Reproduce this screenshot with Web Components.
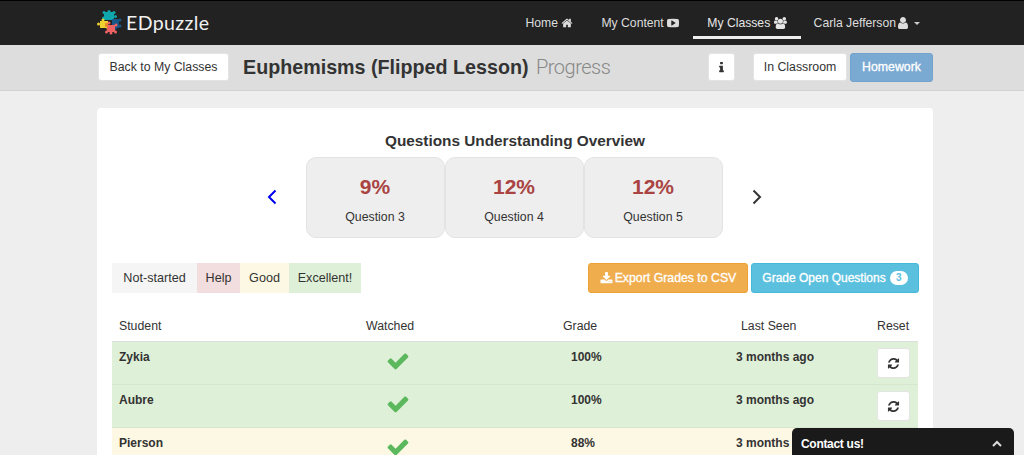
<!DOCTYPE html>
<html>
<head>
<meta charset="utf-8">
<title>EDpuzzle</title>
<style>
  html, body { margin: 0; height: 455px; overflow: hidden; }
  body { background: #eee; color: #333; font-family: "Liberation Sans", Arial, sans-serif; font-size: 13px; }
</style>
</head>
<body>
<ed-navbar></ed-navbar>
<ed-subbar title-text="Euphemisms (Flipped Lesson)"></ed-subbar>
<ed-card>
  <ed-overview></ed-overview>
  <ed-toolbar></ed-toolbar>
  <ed-grades>
    <ed-row name="Zykia" grade="100%" seen="3 months ago" tone="good"></ed-row>
    <ed-row name="Aubre" grade="100%" seen="3 months ago" tone="good"></ed-row>
    <ed-row name="Pierson" grade="88%" seen="3 months ago" tone="ok"></ed-row>
  </ed-grades>
</ed-card>
<ed-contact></ed-contact>

<script>
const ICONS = {
  home: [1792, "M1472 992v480q0 26-19 45t-45 19h-384v-384h-256v384h-384q-26 0-45-19t-19-45v-480q0-1 .5-3t.5-3l575-474 575 474q1 2 1 6zm223-69l-62 74q-8 9-21 11h-3q-13 0-21-7l-692-577-692 577q-12 8-24 7-13-2-21-11l-62-74q-8-10-7-23.500t11-21.500l719-599q32-26 76-26t76 26l244 204v-195q0-14 9-23t23-9h192q14 0 23 9t9 23v408l219 182q10 8 11 21.500t-7 23.500z"],
  play: [1792, "M1280 896q0-37-30-54l-512-320q-31-20-65-2-33 18-33 56v640q0 38 33 56 16 8 31 8 20 0 34-10l512-320q30-17 30-54zm512 0q0 96-1 150t-8.500 136.500-22.500 147.500q-16 73-69 123t-124 58q-222 25-671 25t-671-25q-71-8-124.500-58t-69.500-123q-14-65-21.500-147.500t-8.500-136.500-1-150 1-150 8.500-136.500 22.500-147.500q16-73 69-123t124-58q222-25 671-25t671 25q71 8 124.500 58t69.500 123q14 65 21.500 147.500t8.500 136.500 1 150z"],
  users: [1920, "M593 896q-162 5-265 128h-134q-82 0-138-40.500t-56-118.500q0-353 124-353 6 0 43.500 21t97.500 42.500 119 21.500q67 0 133-23-5 37-5 66 0 139 81 256zm1071 637q0 120-73 189.500t-194 69.500h-874q-121 0-194-69.500t-73-189.500q0-53 3.500-103.500t14-109 26.500-108.500 43-97.500 62-81 85.500-53.500 111.500-20q10 0 43 21.500t73 48 107 48 135 21.500 135-21.500 107-48 73-48 43-21.500q61 0 111.500 20t85.500 53.500 62 81 43 97.500 26.500 108.500 14 109 3.500 103.500zm-1024-1277q0 106-75 181t-181 75-181-75-75-181 75-181 181-75 181 75 75 181zm704 384q0 159-112.500 271.500t-271.500 112.500-271.500-112.500-112.500-271.500 112.500-271.500 271.500-112.500 271.500 112.500 112.500 271.500zm576 225q0 78-56 118.500t-138 40.500h-134q-103-123-265-128 81-117 81-256 0-29-5-66 66 23 133 23 59 0 119-21.500t97.500-42.500 43.500-21q124 0 124 353zm-128-609q0 106-75 181t-181 75-181-75-75-181 75-181 181-75 181 75 75 181z"],
  user: [1792, "M1536 1399q0 109-62.500 187t-150.500 78h-854q-88 0-150.500-78t-62.500-187q0-85 8.500-160.500t31.500-152 58.500-131 94-89 134.500-34.500q131 128 313 128t313-128q76 0 134.500 34.500t94 89 58.500 131 31.500 152 8.500 160.500zm-256-887q0 159-112.500 271.500t-271.500 112.500-271.500-112.500-112.500-271.500 112.500-271.500 271.500-112.500 271.500 112.500 112.500 271.500z"],
  info: [1792, "M1216 1344v128q0 26-19 45t-45 19h-512q-26 0-45-19t-19-45v-128q0-26 19-45t45-19h64v-384h-64q-26 0-45-19t-19-45v-128q0-26 19-45t45-19h384q26 0 45 19t19 45v576h64q26 0 45 19t19 45zm-128-1152v192q0 26-19 45t-45 19h-256q-26 0-45-19t-19-45v-192q0-26 19-45t45-19h256q26 0 45 19t19 45z"],
  download: [1792, "M1344 1344q0-26-19-45t-45-19-45 19-19 45 19 45 45 19 45-19 19-45zm256 0q0-26-19-45t-45-19-45 19-19 45 19 45 45 19 45-19 19-45zm128-224v320q0 40-28 68t-68 28h-1472q-40 0-68-28t-28-68v-320q0-40 28-68t68-28h465l135 136q58 56 136 56t136-56l136-136h464q40 0 68 28t28 68zm-325-569q17 41-14 70l-448 448q-18 19-45 19t-45-19l-448-448q-31-29-14-70 17-39 59-39h256v-448q0-26 19-45t45-19h256q26 0 45 19t19 45v448h256q42 0 59 39z"],
  check: [1792, "M1671 566q0 40-28 68l-724 724-136 136q-28 28-68 28t-68-28l-136-136-362-362q-28-28-28-68t28-68l136-136q28-28 68-28t68 28l294 295 656-657q28-28 68-28t68 28l136 136q28 28 28 68z"],
  refresh: [1792, "M1639 1056q0 5-1 7-64 268-268 434.500t-478 166.500q-146 0-282.500-55t-243.500-157l-129 129q-19 19-45 19t-45-19-19-45v-448q0-26 19-45t45-19h448q26 0 45 19t19 45-19 45l-137 137q71 66 161 102t187 36q134 0 250-65t186-179q11-17 53-117 8-23 30-23h192q13 0 22.500 9.500t9.500 22.500zm25-800v448q0 26-19 45t-45 19h-448q-26 0-45-19t-19-45 19-45l138-138q-148-137-349-137-134 0-250 65t-186 179q-11 17-53 117-8 23-30 23h-199q-13 0-22.500-9.500t-9.500-22.500v-7q65-268 270-434.500t480-166.500q146 0 284 55.500t245 156.500l130-129q19-19 45-19t45 19 19 45z"]
};

class EdIcon extends HTMLElement {
  connectedCallback() {
    const [w, d] = ICONS[this.getAttribute("name")];
    const size = this.getAttribute("size") || 14;
    const width = size * w / 1792;
    this.attachShadow({ mode: "open" }).innerHTML = `
      <style>:host { display: inline-flex; vertical-align: middle; } svg { display: block; fill: currentColor; }</style>
      <svg width="${width}" height="${size}" viewBox="0 0 ${w} 1792"><path d="${d}"/></svg>`;
  }
}
customElements.define("ed-icon", EdIcon);

class EdButton extends HTMLElement {
  constructor() {
    super();
    this.attachShadow({ mode: "open" }).innerHTML = `
      <style>
        :host { display: inline-flex; align-items: center; justify-content: center; box-sizing: border-box;
                height: 28px; padding: 0 10px; background: #fff; border: 1px solid #e4e4e4; border-radius: 3px;
                color: #333; font-size: 12.300px; white-space: nowrap; }
        :host([kind=primary]) { background: #7aa9d2; border-color: #72a3ce; color: #fff; height: 29px; -webkit-text-stroke: .3px #fff; }
        :host([kind=warning]) { background: #f0ad4e; border-color: #eea236; color: #fff; height: 30px; -webkit-text-stroke: .3px #fff; }
        :host([kind=info]) { background: #5bc0de; border-color: #46b8da; color: #fff; height: 30px; -webkit-text-stroke: .3px #fff; }
      </style>
      <slot></slot>`;
  }
}
customElements.define("ed-button", EdButton);

class EdNavbar extends HTMLElement {
  constructor() {
    super();
    this.attachShadow({ mode: "open" }).innerHTML = `
      <style>
        :host { display: flex; box-sizing: border-box; height: 45px; padding: 0 91px 0 97px; background: #222;
                border-top: 1px solid #000; color: #ddd; justify-content: space-between; }
        .brand { display: flex; align-items: center; gap: 4px; padding-bottom: 1px; }
        .brand span { font-family: Lato, sans-serif; font-size: 19.500px; letter-spacing: .4px; color: #f2f2f2; }
        nav { display: flex; }
        a { display: flex; align-items: center; gap: 3.500px; height: 44px; box-sizing: border-box; padding: 0 14px;
            font-size: 12.200px; white-space: nowrap; color: #ddd; }
        a.on { height: 38px; padding-top: 9px; border-bottom: 3px solid #eee; color: #e6e6e6; }
        a.me { gap: 0; padding: 0 13px; }
        .caret { width: 0; height: 0; border: 3.500px solid transparent; border-top-color: #ccc; border-bottom: 0; margin-left: 4px; }
      </style>
      <div class="brand">
        <svg width="25" height="25" viewBox="0 0 25 25">
          <g fill="#0fa7ad"><rect x="7" y="2" width="10" height="8"/><circle cx="12" cy="1.500" r="1.500"/><circle cx="7" cy="2.500" r="1.500"/><circle cx="17" cy="2.500" r="1.500"/><circle cx="18.500" cy="6.500" r="1.500"/><circle cx="6.500" cy="8" r="1.500"/></g>
          <g fill="#1b5686"><rect x="15" y="9" width="7" height="9"/><circle cx="23" cy="10" r="1.500"/><circle cx="23" cy="16" r="1.500"/><circle cx="18" cy="18.500" r="1.500"/></g>
          <g fill="#efd12f"><rect x="3" y="11" width="8" height="7"/><circle cx="1.500" cy="14" r="1.500"/><circle cx="6" cy="10" r="1.500"/><circle cx="11" cy="18.500" r="1.500"/></g>
          <g fill="#ee6264"><rect x="10" y="15" width="8" height="7"/><circle cx="9.500" cy="22" r="1.500"/><circle cx="18.500" cy="22" r="1.500"/><circle cx="14" cy="23" r="1.500"/><circle cx="19" cy="15" r="1.500"/><circle cx="12" cy="13" r="1.500"/></g>
          <rect x="8" y="13" width="3" height="4" fill="#e98a2e"/>
        </svg>
        <span>EDpuzzle</span>
      </div>
      <nav>
        <a>Home <ed-icon name="home" size="12"></ed-icon></a>
        <a>My Content <ed-icon name="play" size="12"></ed-icon></a>
        <a class="on">My Classes <ed-icon name="users" size="12"></ed-icon></a>
        <a class="me">Carla Jefferson <ed-icon name="user" size="14"></ed-icon><span class="caret"></span></a>
      </nav>`;
  }
}
customElements.define("ed-navbar", EdNavbar);

class EdSubbar extends HTMLElement {
  connectedCallback() {
    this.attachShadow({ mode: "open" }).innerHTML = `
      <style>
        :host { display: flex; box-sizing: border-box; height: 46px; padding: 0 91px 1px 98px; align-items: center;
                background: #ddd; border-bottom: 1px solid #d3d3d3; }
        h1 { margin: 0 0 0 14px; font-size: 19.700px; font-weight: bold; color: #333; flex: 1; white-space: nowrap; }
        h1 span { font-family: Roboto, sans-serif; font-weight: 300; color: #888; font-size: 20px; letter-spacing: -.5px; margin-left: 2px; }
        .back { width: 131px; padding: 0; }
        .info { width: 27px; padding: 0; margin-right: 18px; }
        .mode { width: 94px; padding: 0; margin-right: 3px; }
        .home { width: 83px; padding: 0; }
      </style>
      <ed-button class="back">Back to My Classes</ed-button>
      <h1>${this.getAttribute("title-text")} <span>Progress</span></h1>
      <ed-button class="info"><ed-icon name="info" size="13"></ed-icon></ed-button>
      <ed-button class="mode">In Classroom</ed-button>
      <ed-button class="home" kind="primary">Homework</ed-button>`;
  }
}
customElements.define("ed-subbar", EdSubbar);

class EdCard extends HTMLElement {
  constructor() {
    super();
    this.attachShadow({ mode: "open" }).innerHTML = `
      <style>
        :host { display: block; box-sizing: border-box; margin: 17px 91px 0 97px; padding: 23px 15px 0;
                height: 400px; background: #fff; border-radius: 4px; }
      </style>
      <slot></slot>`;
  }
}
customElements.define("ed-card", EdCard);

class EdTile extends HTMLElement {
  constructor() {
    super();
    this.attachShadow({ mode: "open" }).innerHTML = `
      <style>
        :host { display: flex; flex-direction: column; align-items: center; box-sizing: border-box; width: 139px; height: 81px;
                padding-top: 17px; background: #eee; border: 1px solid #e3e3e3; border-radius: 10px; }
        b { font-size: 21px; line-height: 24px; color: #a94442; }
        span { margin-top: 10px; font-size: 12.300px; line-height: 16px; color: #333; }
      </style>
      <b>${this.getAttribute("pct")}</b><span>${this.getAttribute("label")}</span>`;
  }
}
customElements.define("ed-tile", EdTile);

class EdOverview extends HTMLElement {
  constructor() {
    super();
    this.attachShadow({ mode: "open" }).innerHTML = `
      <style>
        :host { display: block; text-align: center; }
        h2 { margin: 0 0 6px; font-size: 15.350px; line-height: 20px; font-weight: bold; color: #333; }
        .strip { display: flex; align-items: center; justify-content: center; }
        svg { display: block; fill: none; stroke-width: 2; margin-top: -2px; }
        .prev { stroke: #00e; margin-right: 29px; margin-left: -2px; }
        .next { stroke: #333; margin-left: 29px; }
      </style>
      <h2>Questions Understanding Overview</h2>
      <div class="strip">
        <svg class="prev" width="10" height="16" viewBox="0 0 10 16"><path d="M8.500 1.500 2 8l6.500 6.500"/></svg>
        <ed-tile pct="9%" label="Question 3"></ed-tile>
        <ed-tile pct="12%" label="Question 4"></ed-tile>
        <ed-tile pct="12%" label="Question 5"></ed-tile>
        <svg class="next" width="10" height="16" viewBox="0 0 10 16"><path d="M1.500 1.500 8 8l-6.500 6.500"/></svg>
      </div>`;
  }
}
customElements.define("ed-overview", EdOverview);

class EdToolbar extends HTMLElement {
  constructor() {
    super();
    this.attachShadow({ mode: "open" }).innerHTML = `
      <style>
        :host { display: flex; justify-content: space-between; margin: 25px -1px 0 0; height: 30px; }
        .legend { display: flex; font-size: 12.600px; color: #333; }
        .legend span { display: flex; align-items: center; justify-content: center; }
        .actions { display: flex; gap: 3px; }
        .count { display: inline-block; width: 18px; height: 14px; line-height: 14px; margin-left: 4px; border-radius: 7px; background: #fff;
                 color: #5bc0de; font-size: 10px; font-weight: bold; text-align: center; -webkit-text-stroke: 0; }
        ed-icon { margin-right: 2px; }
        .export { width: 160px; padding: 0; font-size: 12.300px; }
        .grade { width: 168px; padding: 0; font-size: 12px; }
      </style>
      <div class="legend">
        <span style="width:85px;background:#f5f5f5">Not-started</span>
        <span style="width:43px;background:#f2dede">Help</span>
        <span style="width:49px;background:#fcf8e3">Good</span>
        <span style="width:72px;background:#dff0d8">Excellent!</span>
      </div>
      <div class="actions">
        <ed-button class="export" kind="warning"><ed-icon name="download" size="13"></ed-icon>Export Grades to CSV</ed-button>
        <ed-button class="grade" kind="info">Grade Open Questions<span class="count">3</span></ed-button>
      </div>`;
  }
}
customElements.define("ed-toolbar", EdToolbar);

class EdGrades extends HTMLElement {
  constructor() {
    super();
    this.attachShadow({ mode: "open" }).innerHTML = `
      <style>
        :host { display: block; margin-top: 24px; width: 806px; }
        .head { display: grid; grid-template-columns: 247px 197px 178px 136px auto; height: 24px; padding-left: 7px;
                border-bottom: 1px solid #ddd; font-size: 12.300px; line-height: 18px; color: #333; }
      </style>
      <div class="head"><span>Student</span><span>Watched</span><span>Grade</span><span>Last Seen</span><span>Reset</span></div>
      <slot></slot>`;
  }
}
customElements.define("ed-grades", EdGrades);

class EdRow extends HTMLElement {
  connectedCallback() {
    this.attachShadow({ mode: "open" }).innerHTML = `
      <style>
        :host { display: grid; grid-template-columns: 247px 197px 173px 141px auto; box-sizing: border-box; height: 43px; padding: 6px 0 0 7px;
                border-bottom: 1px solid #d6e6cf; font-size: 12px; font-weight: bold; color: #333; background: #dff0d8; }
        :host([tone=ok]) { background: #fcf8e3; border-bottom-color: #eee; }
        span { line-height: 18px; }
        .check { color: #5cb85c; padding: 1px 0 0 20px; }
        .grade { padding-left: 8px; }
        ed-button { width: 33px; height: 30px; padding: 0; }
      </style>
      <span>${this.getAttribute("name")}</span>
      <span class="check"><ed-icon name="check" size="24"></ed-icon></span>
      <span class="grade">${this.getAttribute("grade")}</span>
      <span>${this.getAttribute("seen")}</span>
      <div><ed-button><ed-icon name="refresh" size="13"></ed-icon></ed-button></div>`;
  }
}
customElements.define("ed-row", EdRow);

class EdContact extends HTMLElement {
  constructor() {
    super();
    this.attachShadow({ mode: "open" }).innerHTML = `
      <style>
        :host { position: fixed; left: 792px; right: 10px; bottom: 0; height: 27px; box-sizing: border-box; padding: 4px 12px 0 9px;
                display: flex; align-items: center; justify-content: space-between; background: #1a1a1a; color: #fff;
                border-radius: 5px 5px 0 0; font-size: 12px; letter-spacing: -.3px; font-weight: bold; }
        svg { display: block; fill: none; stroke: #ddd; stroke-width: 2; }
      </style>
      <span>Contact us!</span>
      <svg width="10" height="7" viewBox="0 0 10 7"><path d="M1 6l4-4 4 4"/></svg>`;
  }
}
customElements.define("ed-contact", EdContact);
</script>
</body>
</html>
